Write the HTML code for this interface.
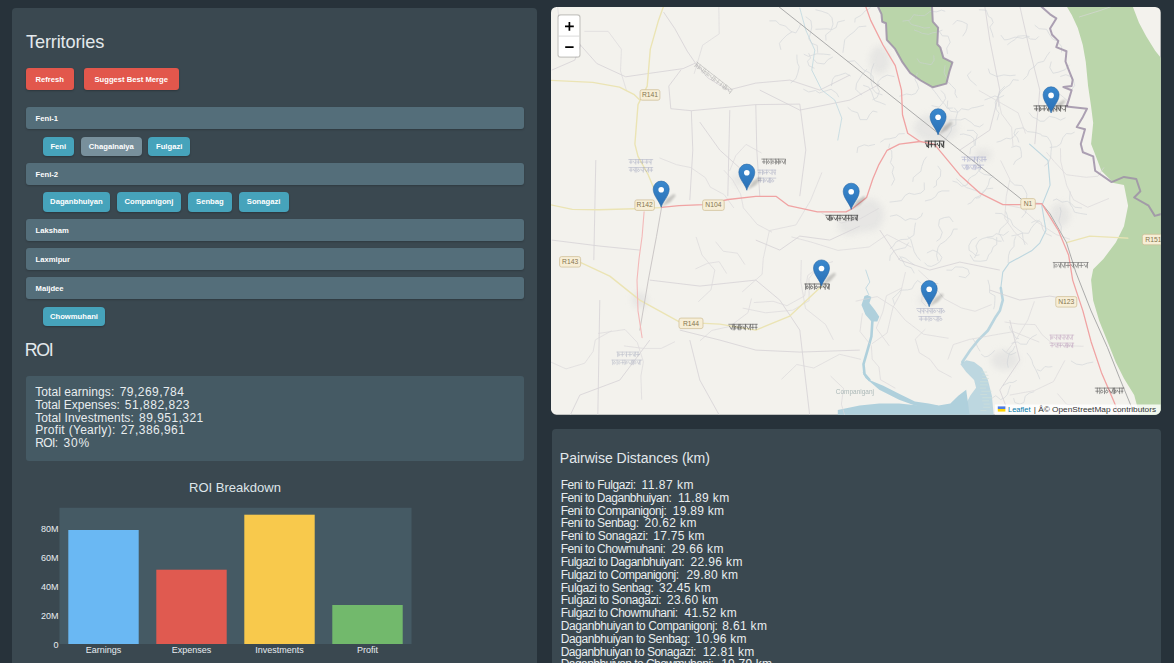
<!DOCTYPE html>
<html>
<head>
<meta charset="utf-8">
<title>Territories</title>
<style>
*{box-sizing:border-box;margin:0;padding:0}
html,body{width:1174px;height:663px;overflow:hidden;background:#27323a;font-family:"Liberation Sans",sans-serif;color:#eceff1}
.abs{position:absolute}
#left{position:absolute;left:12px;top:8px;width:525px;height:670px;background:#3a4850;border-radius:4px 4px 0 0}
#right{position:absolute;left:552px;top:428.5px;width:608.8px;height:250px;background:#3a4850;border-radius:4px 4px 0 0}
h2{position:absolute;font-weight:normal;color:#e3e9ec;white-space:nowrap;line-height:1}
.btn{position:absolute;top:67.8px;height:22.6px;background:#e2574c;border-radius:3px;color:#fff;font-weight:bold;font-size:7.65px;line-height:23.8px;text-align:center;box-shadow:0 1px 2px rgba(0,0,0,.25)}
.th{position:absolute;left:26px;width:498px;height:22.4px;background:#546e7a;border-radius:3px;color:#fff;font-weight:bold;font-size:7.65px;line-height:23.6px;padding-left:9.6px;box-shadow:0 1px 2px rgba(0,0,0,.2)}
.chip{position:absolute;height:19.5px;background:#46a3bb;border-radius:4px;color:#fff;font-weight:bold;font-size:7.65px;line-height:19.9px;text-align:center;box-shadow:0 1px 2px rgba(0,0,0,.25)}
.chip.g{background:#78909c}
#roibox{position:absolute;left:26px;top:376px;width:498px;height:84.5px;background:#455a64;border-radius:3px}
.tx{position:absolute;font-size:12px;line-height:14px;color:#e8edef;white-space:pre}
.rl{position:absolute;left:35.5px;font-size:12.6px;line-height:13px;color:#f3f6f7;white-space:nowrap}
.dl{position:absolute;left:560.7px;font-size:12.6px;line-height:13px;color:#f3f6f7;white-space:nowrap}
</style>
</head>
<body>
<div id="left"></div>
<div id="right"></div>

<h2 style="left:26px;top:33.1px;font-size:18.2px;letter-spacing:-0.16px">Territories</h2>
<div class="btn" style="left:25.5px;width:48.5px">Refresh</div>
<div class="btn" style="left:84px;width:94.5px">Suggest Best Merge</div>

<div class="th" style="top:107px">Feni-1</div>
<div class="chip" style="top:136.5px;left:42.7px;width:31.2px">Feni</div>
<div class="chip g" style="top:136.5px;left:81px;width:60.6px">Chagalnaiya</div>
<div class="chip" style="top:136.5px;left:148px;width:42.4px">Fulgazi</div>

<div class="th" style="top:162.7px">Feni-2</div>
<div class="chip" style="top:192px;left:42.7px;width:67.5px">Daganbhuiyan</div>
<div class="chip" style="top:192px;left:117.3px;width:63.4px">Companigonj</div>
<div class="chip" style="top:192px;left:187.9px;width:43.9px">Senbag</div>
<div class="chip" style="top:192px;left:238.7px;width:49.9px">Sonagazi</div>

<div class="th" style="top:218.7px">Laksham</div>
<div class="th" style="top:247.7px">Laxmipur</div>
<div class="th" style="top:276.9px">Maijdee</div>
<div class="chip" style="top:306.5px;left:42.7px;width:62.5px">Chowmuhani</div>

<h2 style="left:24.7px;top:341.9px;font-size:17.8px;letter-spacing:-1.28px">ROI</h2>
<div id="roibox"></div>
<!--ROI_S-->
<div class="tx" style="left:35.2px;top:385.0px;letter-spacing:0.07px">Total earnings:</div><div class="tx" style="left:119.7px;top:385.0px;letter-spacing:0.46px">79,269,784</div>
<div class="tx" style="left:35.2px;top:397.8px;letter-spacing:-0.01px">Total Expenses:</div><div class="tx" style="left:124.8px;top:397.8px;letter-spacing:0.52px">51,882,823</div>
<div class="tx" style="left:35.2px;top:410.6px;letter-spacing:0.11px">Total Investments:</div><div class="tx" style="left:139.1px;top:410.6px;letter-spacing:0.46px">89,951,321</div>
<div class="tx" style="left:35.2px;top:423.3px;letter-spacing:0.30px">Profit (Yearly):</div><div class="tx" style="left:120.7px;top:423.3px;letter-spacing:0.46px">27,386,961</div>
<div class="tx" style="left:35.2px;top:436.1px;letter-spacing:-0.60px">ROI:</div><div class="tx" style="left:63.4px;top:436.1px;letter-spacing:0.85px">30%</div>
<!--ROI_E-->

<svg class="abs" style="left:0;top:470px" width="540" height="193" viewBox="0 470 540 193">
<rect x="59.5" y="507.8" width="352" height="136.2" fill="#455a64"/>
<rect x="68.3" y="530" width="70.4" height="114" fill="#6ab8f3"/>
<rect x="156.3" y="569.7" width="70.4" height="74.3" fill="#e05a50"/>
<rect x="244.3" y="514.7" width="70.4" height="129.3" fill="#f8c94c"/>
<rect x="332.3" y="605" width="70.4" height="39" fill="#72b96c"/>
<g font-family="Liberation Sans, sans-serif" fill="#e8edf0" font-size="9px">
<text x="235" y="491.5" text-anchor="middle" font-size="13px" fill="#dfe6ea">ROI Breakdown</text>
<text x="58.6" y="532.3" text-anchor="end">80M</text>
<text x="58.6" y="561.1" text-anchor="end">60M</text>
<text x="58.6" y="589.8" text-anchor="end">40M</text>
<text x="58.6" y="618.6" text-anchor="end">20M</text>
<text x="58.6" y="647.6" text-anchor="end">0</text>
<text x="103.5" y="653.4" text-anchor="middle">Earnings</text>
<text x="191.5" y="653.4" text-anchor="middle">Expenses</text>
<text x="279.5" y="653.4" text-anchor="middle">Investments</text>
<text x="367.5" y="653.4" text-anchor="middle">Profit</text>
</g>
</svg>
<!--MAP_S-->
<svg class="abs" style="left:551.2px;top:6.9px" width="609.7" height="407.7" viewBox="551.2 6.9 609.7 407.7">
<defs>
<clipPath id="mc"><rect x="551.2" y="6.9" width="609.7" height="407.7" rx="5.5" ry="5.5"/></clipPath>
<linearGradient id="mg" x1="0" y1="0" x2="0" y2="1"><stop offset="0" stop-color="#3a88cd"/><stop offset="1" stop-color="#2a70b6"/></linearGradient>
<filter id="bl" x="-50%" y="-50%" width="200%" height="200%"><feGaussianBlur stdDeviation="1.1"/></filter>
<filter id="bl2" x="-50%" y="-50%" width="200%" height="200%"><feGaussianBlur stdDeviation="3"/></filter>
</defs>
<g clip-path="url(#mc)">
<rect x="550" y="6" width="612" height="410" fill="#f3f2ed"/>
<g fill="#dcdcdc" opacity=".55" filter="url(#bl2)"><ellipse cx="936" cy="128" rx="22" ry="14"/><ellipse cx="938" cy="126" rx="14" ry="9"/><ellipse cx="862" cy="218" rx="14" ry="14"/><ellipse cx="870" cy="215" rx="14" ry="16"/><ellipse cx="850" cy="225" rx="12" ry="10"/><ellipse cx="1005" cy="360" rx="14" ry="10"/><ellipse cx="1060" cy="215" rx="10" ry="12"/><ellipse cx="880" cy="60" rx="10" ry="14"/><ellipse cx="640" cy="300" rx="8" ry="8"/><ellipse cx="740" cy="180" rx="7" ry="6"/><ellipse cx="925" cy="300" rx="7" ry="5"/><ellipse cx="983" cy="155" rx="9" ry="6"/></g>
<g fill="#bad5aa"><path d="M877.9 6.0L881.7 14.1L882.4 21.6L886.2 23.1L887.0 39.7L895.3 48.8L902.8 62.3L910.4 72.9L920.9 80.4L933.0 87.2L946.6 83.5L949.6 71.4L952.6 62.3L943.6 57.8L940.5 47.3L937.5 44.2L938.3 27.6L933.0 21.6L932.2 6.0Z"/><path d="M1066.7 6.0L1072.0 15.0L1078.0 28.0L1083.0 45.0L1086.0 62.0L1088.3 86.0L1091.3 106.5L1093.4 122.9L1091.3 144.0L1095.4 154.3L1101.6 170.7L1113.9 183.0L1124.2 185.0L1128.3 205.6L1124.2 226.1L1116.0 242.5L1103.6 258.9L1093.4 269.2L1091.3 280.0L1093.4 300.5L1099.5 321.0L1107.8 341.6L1116.0 362.1L1124.2 378.5L1134.4 394.9L1140.0 416.0L1162.0 416.0L1162.0 59.0L1155.4 50.7L1146.4 36.2L1139.2 22.6L1132.8 6.0Z"/></g>
<g fill="#afd0dc"><path d="M864.7 295.9L861.7 304.8L865.7 314.6L871.6 321.5L877.5 321.5L879.5 316.6L875.6 310.7L869.6 302.8L871.6 296.9L867.7 294.9Z"/><path d="M869.6 379.8L883.5 385.7L899.3 393.6L915.1 401.5L928.9 403.5L938.8 405.5L930.9 408.5L915.1 405.5L899.3 399.6L879.5 389.7L865.7 377.8L862.5 372.0Z"/><path d="M838.0 410.0L859.8 405.5L879.5 403.5L899.3 403.5L919.0 405.5L938.8 405.5L950.6 403.5L958.5 395.6L966.4 389.7L970.0 416.0L838.0 416.0Z"/><path d="M960.5 364.0L966.4 371.9L974.3 379.8L976.3 387.7L970.4 395.6L966.4 403.5L966.4 416.0L994.0 416.0L992.1 395.6L988.1 379.8L982.2 368.0L974.3 362.0L966.4 360.1Z" opacity=".8"/></g>
<g fill="none" stroke="#afd0dc" stroke-linejoin="round" stroke-linecap="round">
<path d="M872.6 321.0L871.6 336.4L867.7 350.2L863.7 364.0L864.7 373.9L869.6 379.8" stroke-width="2.6"/>
<path d="M962.5 362.0L970.4 350.2L978.3 340.3L988.1 330.4L996.0 316.6L1000.0 310.7L1003.0 300.0L1001.0 288.0" stroke-width="2.6" opacity=".85"/>
<path d="M1029.8 144.0L1040.0 153.0L1048.2 160.4L1050.3 185.0L1042.0 205.6L1046.2 230.2L1040.0 243.0L1031.8 250.7L1009.3 263.0L1003.0 272.0L1001.0 288.0" stroke-width="1.1" opacity=".8"/>
<path d="M868.9 294.4L866.0 288.0L870.0 282.0L866.0 270.0" stroke-width="1" opacity=".7"/>
<path d="M800.0 8.0L806.0 30.0L815.0 50.0L812.0 70.0L822.0 90.0L835.0 100.0L842.0 118.0L838.0 140.0" stroke-width="1" opacity=".6"/>
</g>
<g stroke="#cfe0d8" stroke-width=".8" opacity=".8"><path d="M981.3 372.0h6"/><path d="M982.6 375.2h6"/><path d="M982.1 378.4h7"/><path d="M980.2 381.6h8"/><path d="M980.1 384.8h8"/><path d="M980.3 388.0h6"/><path d="M981.7 391.2h10"/><path d="M980.5 394.4h7"/><path d="M982.5 397.6h10"/><path d="M982.3 400.8h7"/><path d="M983.9 404.0h6"/><path d="M983.4 407.2h7"/><path d="M980.6 410.4h6"/></g>
<g fill="none" stroke="#d6d2d6" stroke-width=".8" stroke-linejoin="round"><path d="M580.7 45.0L597.0 63.4L625.9 76.7L646.4 73.7L683.3 68.5L695.6 63.0"/><path d="M663.8 12.0L675.0 28.5L687.4 51.0L695.6 63.0L708.0 77.8L728.5 90.0L756.0 83.0L790.0 80.0L820.0 90.0L850.0 75.0"/><path d="M681.3 69.6L669.0 86.0L671.0 108.6L691.5 110.6L756.0 104.5L800.0 104.0L806.0 150.0L800.0 196.0"/><path d="M560.0 20.0L580.7 45.0L575.0 60.0L552.0 70.0"/><path d="M691.5 110.6L693.0 150.0L690.0 200.0"/><path d="M756.0 104.5L757.0 150.0L760.0 196.0"/><path d="M700.0 122.0L720.0 150.0L740.0 168.0"/><path d="M756.0 240.0L780.0 250.0L800.0 236.0L830.0 240.0L860.0 226.0"/><path d="M552.0 240.0L600.0 246.0L640.0 250.0"/><path d="M650.0 280.0L700.0 286.0L756.0 280.0L780.0 300.0L800.0 330.0L810.0 416.0"/><path d="M680.0 330.0L720.0 340.0L756.0 350.0L800.0 352.0L860.0 350.0"/><path d="M600.0 300.0L598.0 416.0"/><path d="M650.0 340.0L620.0 380.0L580.0 395.0L570.0 416.0"/><path d="M690.0 340.0L700.0 380.0L720.0 416.0"/><path d="M760.0 90.0L800.0 110.0L850.0 100.0L880.0 84.0"/><path d="M960.0 150.0L990.0 130.0L1000.0 90.0L990.0 40.0L985.0 6.0"/><path d="M1020.0 6.0L1030.0 50.0L1040.0 90.0L1035.0 144.0"/><path d="M880.0 230.0L900.0 260.0L930.0 270.0L960.0 262.0L1000.0 270.0"/><path d="M990.0 290.0L1020.0 300.0L1050.0 296.0L1075.0 300.0"/><path d="M1010.0 320.0L1020.0 360.0L1000.0 390.0L1010.0 416.0"/><path d="M596.0 160.0L594.0 260.0"/><path d="M730.0 110.0L728.0 196.0"/></g>
<g fill="none" stroke="#cdd0d6" stroke-width=".8" stroke-linejoin="round" opacity=".7"><path d="M907.8 236.3L910.9 239.2L912.6 245.1L914.4 251.6L917.2 256.4L920.7 260.4"/><path d="M872.7 99.6L877.3 97.4L879.6 91.3L877.9 87.7L878.2 81.7L882.0 77.6L887.3 75.0L894.7 76.5"/><path d="M962.9 36.1L965.9 31.7L967.1 28.1L967.5 24.0L962.3 21.4L957.1 20.3L953.2 24.4"/><path d="M996.9 237.1L997.0 244.4L993.4 246.8L991.6 251.9L988.9 254.9L986.8 260.4L980.4 261.2L974.0 260.8L970.2 254.7"/><path d="M983.7 124.0L979.7 126.8L974.6 125.4L971.2 122.1L965.2 118.3L960.9 119.8L953.3 119.7L949.2 120.0"/><path d="M1011.6 147.3L1016.3 145.8L1020.3 147.1L1021.4 151.3L1021.7 157.1L1015.8 160.8L1013.7 164.7"/><path d="M979.7 161.1L980.4 168.8L976.1 174.4L971.9 176.5L969.0 178.9L967.2 184.9L961.8 186.2L957.1 182.2L952.7 181.0"/><path d="M891.7 185.4L894.8 179.3L892.4 172.5L893.9 167.0L890.7 162.6L892.1 157.4L891.9 150.8L889.0 147.7L889.9 143.5"/><path d="M988.1 279.8L989.8 285.9L989.8 292.7L995.2 295.8L995.1 300.3L994.8 305.3L993.8 309.1"/><path d="M974.7 257.9L977.7 251.3L976.2 245.9L979.2 240.4L982.9 238.4L986.8 237.4L992.6 238.2L997.9 240.9L1001.7 241.2"/><path d="M930.1 27.4L924.4 28.0L919.2 26.2L911.9 24.5L908.4 20.3"/><path d="M946.7 270.0L952.2 270.1L955.5 266.8L962.9 267.1L968.3 269.3L969.6 273.8L965.7 277.6L959.0 276.2"/><path d="M926.9 156.6L924.1 160.4L922.0 166.4L921.1 171.2L917.4 174.1L913.5 177.5L913.0 181.8"/><path d="M977.1 237.2L972.1 240.0L969.1 245.4L969.3 250.2L972.8 252.4L976.1 255.5L979.8 254.7"/><path d="M924.8 262.6L927.7 265.7L931.5 266.3L936.2 264.3L940.4 261.4L942.1 257.2L938.4 252.3L933.1 250.0L927.1 252.9"/><path d="M936.7 241.2L940.4 238.5L942.5 232.2L938.8 225.4L939.7 219.3L944.5 217.5L949.6 216.8L953.4 221.9"/><path d="M867.0 69.1L862.0 75.0L858.7 80.2L856.7 83.6L856.0 89.2L858.9 92.3L862.3 95.0"/><path d="M866.5 26.0L858.9 26.7L854.1 31.9L848.6 35.9L844.9 39.7L844.0 46.3L843.1 52.7"/><path d="M938.4 261.1L936.8 255.3L938.1 247.8L940.0 244.5L945.6 241.0L948.1 238.2L951.3 234.9L953.8 229.0L957.8 229.0"/><path d="M975.6 145.6L975.7 141.0L977.6 134.3L973.5 130.3L967.2 130.3"/><path d="M953.0 107.9L947.3 108.2L945.1 104.4L941.4 100.4L937.1 94.4L934.5 91.0L931.7 87.9"/><path d="M938.5 283.6L931.2 282.8L926.0 285.8L922.7 291.1L922.4 296.2L921.9 301.4L926.6 306.5"/><path d="M922.8 212.7L921.5 216.2L916.7 219.3L910.2 218.5L905.4 220.4L900.9 216.9L896.9 214.8L890.1 216.2"/><path d="M1005.0 86.1L1000.3 91.1L998.2 96.7L995.4 102.1L996.5 109.4L999.3 113.1L997.3 120.1"/><path d="M945.3 65.3L944.3 72.9L946.7 77.4L948.0 81.5L951.8 85.5L955.7 89.5L955.2 93.6L957.4 97.8"/><path d="M874.1 83.4L873.1 76.4L869.6 72.6L863.8 69.7L859.8 65.6L854.7 60.7L847.4 61.5"/><path d="M960.1 134.4L963.8 133.9L970.7 135.7L973.9 138.3L974.6 145.5L970.9 147.9L970.0 154.3"/><path d="M1005.9 211.3L1007.4 215.0L1008.4 221.4L1004.2 225.7L1000.4 229.0L999.1 233.3L1001.6 236.7L1003.7 241.3"/><path d="M909.0 242.4L905.6 247.6L900.9 248.6L894.8 250.2L890.4 255.7L889.9 260.7"/><path d="M925.2 200.9L931.7 199.3L935.8 196.5L938.3 192.3L942.2 190.8L949.6 190.8"/><path d="M1001.1 35.0L1004.6 39.8L1008.4 39.4L1015.3 37.0L1023.0 38.3L1027.3 36.8L1030.8 38.9L1036.0 39.3L1038.9 36.4"/><path d="M914.5 273.2L911.5 267.7L905.4 265.6L903.0 260.8L899.8 255.7"/><path d="M933.6 187.4L936.7 185.3L936.7 180.6L940.6 176.3L941.0 170.1L938.0 165.8"/><path d="M902.7 21.0L910.1 20.1L913.9 14.6L919.0 15.4L924.7 15.6L930.2 11.4L937.0 11.7L941.7 10.0L945.4 11.2"/><path d="M976.7 85.5L973.0 82.2L970.0 79.6L967.6 75.0L971.4 71.3"/><path d="M880.6 142.1L885.0 139.1L889.8 138.7L896.1 137.2L898.9 133.8L904.9 133.5"/><path d="M921.4 283.0L917.8 280.4L914.7 284.0L912.3 288.7L907.9 289.8L900.9 290.1L897.8 293.7L892.9 298.2L894.7 304.5"/><path d="M914.2 29.9L918.7 31.4L922.5 33.3L928.8 34.2L933.2 32.6L937.0 32.1L942.6 30.0"/><path d="M874.1 63.4L871.7 70.0L871.0 75.0L871.5 82.8L873.1 89.0L876.2 92.8L882.7 94.8"/><path d="M996.8 142.1L1001.0 141.0L1006.5 138.1L1010.8 138.7L1014.3 136.4L1018.7 131.1"/><path d="M984.7 99.9L988.5 98.5L995.2 95.8L999.3 97.7L1004.3 95.3"/><path d="M988.5 68.5L990.0 73.3L996.9 76.4L1004.0 74.8L1010.3 75.6L1015.8 75.0"/><path d="M980.6 192.0L974.6 190.1L971.0 188.8L966.5 187.4L962.7 184.3L959.8 181.4L956.5 178.4"/><path d="M939.1 30.8L942.6 35.7L948.3 36.0L950.4 42.2L946.9 48.1L947.7 53.8"/><path d="M1008.3 262.8L1008.7 255.7L1010.1 251.0L1014.2 246.3L1014.4 240.7L1015.9 236.3"/><path d="M917.7 72.7L915.2 79.5L917.4 83.4L919.0 88.3L915.8 93.4L911.9 94.7L906.6 93.9L899.5 96.2"/><path d="M915.8 222.6L914.9 227.4L914.1 235.0L907.9 239.1L901.1 239.5L895.8 242.2L893.3 246.4L890.1 248.6"/><path d="M947.9 100.5L947.5 106.6L950.9 111.2L958.4 112.1L961.7 108.6L968.4 109.8L971.9 107.9L976.9 107.0L984.1 105.1"/><path d="M898.5 259.4L902.0 256.8L905.9 258.3L909.6 261.3L914.7 265.0"/><path d="M924.4 182.5L924.6 189.8L921.1 192.9L914.6 194.3L909.3 193.1L905.5 195.2L901.7 200.5L895.2 201.4L889.8 202.0"/><path d="M941.1 90.3L944.8 94.2L945.9 98.3L943.3 102.5L939.3 107.1L931.8 105.5"/><path d="M943.1 145.1L945.5 139.2L948.3 135.5L951.4 130.7L951.7 126.7L956.1 124.6L956.1 118.1L958.0 111.7L954.3 107.6"/><path d="M986.7 237.2L993.2 236.2L996.4 233.6L1003.7 235.2L1008.9 231.3"/><path d="M934.0 55.2L934.3 60.2L931.4 64.6L924.7 63.4L920.0 62.4L917.3 58.4"/><path d="M875.2 144.3L868.5 145.8L864.4 144.7L858.0 147.2L857.2 152.8"/><path d="M1061.7 52.4L1061.8 46.4L1057.1 40.8L1052.9 39.0L1049.1 33.3L1046.8 29.2L1039.3 28.6L1034.9 25.0"/><path d="M1023.5 79.7L1027.7 75.5L1029.7 70.0L1035.1 66.2L1037.8 62.7L1044.0 61.2L1047.2 55.6L1050.1 51.7"/><path d="M1069.7 64.7L1065.3 69.6L1058.2 72.2L1053.2 73.1L1050.0 67.5L1051.5 61.5"/><path d="M1007.6 44.7L1011.5 41.6L1015.1 39.6L1017.9 36.1L1024.4 35.6L1029.8 36.5"/><path d="M1044.3 103.1L1048.8 98.6L1051.6 93.3L1058.4 92.9L1063.4 96.9L1067.4 100.5"/><path d="M998.8 106.5L999.0 101.1L998.8 95.8L1001.2 91.7L1005.6 87.6L1010.2 84.6L1013.2 79.6L1018.9 80.2"/><path d="M1041.7 134.4L1035.1 132.3L1027.7 131.5L1023.3 127.7L1015.8 128.9L1014.2 133.8L1017.7 137.9L1019.1 142.4"/><path d="M1010.2 180.5L1014.9 184.9L1022.3 185.5L1025.3 190.2L1027.1 194.2L1026.4 201.1L1027.1 207.9L1025.4 213.3L1021.9 217.6"/><path d="M1051.9 236.1L1046.0 233.4L1042.9 229.0L1041.3 222.2L1036.8 220.2L1031.6 222.6"/><path d="M1074.8 132.0L1071.3 133.8L1066.7 133.4L1063.1 137.6L1060.8 143.9L1056.8 146.6L1050.0 147.4"/><path d="M1070.5 191.3L1069.9 197.9L1070.2 203.9L1072.7 207.4L1074.8 212.1L1080.3 213.3L1087.2 214.4"/><path d="M1065.7 117.6L1060.7 120.0L1055.5 117.5L1049.5 116.3L1044.3 121.1L1040.3 121.1L1036.8 118.6L1032.9 117.1L1029.2 112.5"/><path d="M1039.9 219.8L1034.9 223.7L1031.3 228.3L1028.8 233.2L1022.5 233.0L1017.9 234.7L1011.7 235.8"/><path d="M993.6 176.2L989.9 178.6L988.6 184.6L985.1 191.0L980.7 195.5L975.0 197.8L971.6 202.4L967.9 204.2"/><path d="M993.3 188.1L986.5 188.8L982.6 192.1L979.9 197.5L976.1 198.1"/><path d="M993.5 37.3L992.6 33.7L990.1 26.9L993.4 22.6L991.8 18.2L988.7 16.3L986.4 10.0L979.1 9.7"/><path d="M991.6 175.5L984.3 174.3L979.6 171.4L978.5 165.6L977.1 158.4L979.4 155.5"/><path d="M995.4 213.2L1002.1 213.5L1005.7 216.5L1010.7 219.5L1013.1 225.3L1018.0 229.2L1022.6 232.5L1023.2 238.4L1025.3 245.0"/><path d="M1053.3 200.3L1056.8 198.9L1062.3 202.0L1067.5 201.2L1071.6 203.6L1074.9 207.1L1082.3 207.9"/><path d="M1060.5 76.4L1066.1 74.6L1072.5 77.1L1073.8 80.9L1074.9 85.3L1071.9 89.5"/><path d="M1044.6 165.9L1048.4 163.0L1050.8 157.7L1051.2 152.4L1051.9 145.4L1050.5 141.1L1047.4 136.6L1041.5 135.5"/><path d="M1060.2 207.1L1061.2 211.1L1060.5 215.3L1059.0 220.8L1061.5 226.5L1061.2 232.5"/><path d="M803.5 89.0L808.9 91.9L815.7 90.4L819.4 92.9L824.4 91.3L831.3 89.2L836.7 92.9L839.0 97.0"/><path d="M801.0 23.5L799.2 27.8L796.0 32.9L792.3 31.6L787.1 35.0L782.4 39.7L779.6 43.3L781.1 49.7"/><path d="M833.1 56.9L828.4 59.3L824.4 63.9L817.1 62.9L813.9 59.2"/><path d="M855.0 22.4L855.4 18.4L861.5 15.1L865.4 10.8L870.2 8.1L871.1 1.7L872.7 -5.1"/><path d="M804.0 54.1L808.6 56.3L812.6 55.1L816.7 53.7L823.6 54.0L830.6 54.7"/><path d="M847.9 107.2L851.8 110.7L857.9 112.7L860.3 119.5L867.2 119.5L869.8 114.5L873.1 110.9L877.5 112.0"/><path d="M792.4 32.1L789.3 29.7L785.8 26.0L779.8 24.3L776.2 20.7L769.6 20.8"/><path d="M844.9 20.3L838.0 21.9L836.4 27.3L832.3 29.5L827.3 28.7L821.2 29.0L815.7 29.2"/><path d="M790.9 82.9L795.9 78.8L798.0 73.1L799.4 66.7L797.7 63.0L797.1 58.2L797.1 54.5"/><path d="M863.4 85.2L869.1 87.1L871.9 92.1L873.1 96.0L875.0 100.6L879.9 102.2L885.8 104.6"/><path d="M831.6 85.9L832.7 79.5L835.1 76.1L838.8 75.3L845.5 73.0L851.0 76.0"/><path d="M808.9 53.1L810.8 57.9L807.7 61.1L809.2 65.7L814.7 68.2"/><path d="M817.9 52.7L817.5 45.4L811.9 43.2L808.9 38.6L810.4 34.1L812.0 26.9L811.1 20.6L805.9 16.6"/><path d="M826.2 40.5L825.9 34.8L831.2 30.5L833.2 24.1L832.2 17.7L828.5 13.5L822.1 11.2L815.7 9.6"/><path d="M1011.7 343.2L1017.4 341.8L1020.9 344.0L1026.9 344.2L1028.8 340.4L1032.1 337.0L1036.9 334.5"/><path d="M1052.5 366.5L1049.0 367.0L1045.1 366.5L1040.9 371.0L1037.1 369.5"/><path d="M1040.1 379.2L1038.2 374.5L1036.1 369.8L1033.2 364.5L1032.0 360.1L1030.0 356.4L1027.1 352.8"/><path d="M1010.6 385.1L1008.8 390.5L1007.8 394.2L1004.4 397.9L1000.8 399.5L996.0 395.6L992.4 398.0"/><path d="M1008.5 367.6L1007.4 362.9L1008.1 358.7L1009.7 352.8L1013.1 350.4L1015.1 346.0"/><path d="M1034.5 391.6L1029.5 393.0L1025.4 396.1L1024.2 402.3L1020.2 404.1L1015.0 402.4L1013.8 398.0"/><path d="M994.9 350.3L992.0 353.5L988.1 356.2L985.0 356.8L981.4 354.1"/><path d="M980.4 351.3L978.1 347.6L976.1 343.1L973.1 338.6"/><path d="M1019.1 338.5L1016.0 338.1L1013.9 333.9L1010.6 329.5L1009.7 326.1"/><path d="M1002.6 349.3L1007.0 352.9L1011.1 354.8L1016.4 352.3"/><path d="M1071.2 360.8L1076.5 364.0L1082.5 364.9L1087.4 363.1L1093.5 362.0"/><path d="M1017.0 380.3L1013.1 382.4L1009.8 382.3L1006.8 383.6L1003.0 385.5"/></g>
<g fill="none" stroke="#dad7da" stroke-width=".75" stroke-linejoin="round" opacity=".85"><path d="M1013.2 146.0L1011.8 127.3L1001.7 113.7L997.8 95.9"/><path d="M700.2 340.7L712.1 330.3L729.7 326.5L748.2 312.6L751.7 298.5"/><path d="M1027.8 244.1L1014.9 232.2L1005.0 218.2L1006.4 196.6L1010.1 179.3L1000.8 160.3"/><path d="M726.9 273.5L719.4 261.6L707.6 263.3L695.7 268.8"/><path d="M801.5 259.9L801.0 281.3L805.7 308.4L825.7 324.3L833.6 339.8"/><path d="M1034.6 301.3L1028.1 319.7L1016.6 338.9L1006.7 351.8"/><path d="M830.8 376.0L843.7 388.2L841.6 404.1L849.4 430.0L877.5 442.5L902.2 432.7"/><path d="M948.7 338.2L923.7 334.1L905.6 320.3L895.0 307.6L877.4 296.5L855.9 301.1"/><path d="M925.4 329.2L915.5 339.0L919.5 352.6L930.2 359.2L938.3 370.0L951.8 377.2"/><path d="M1046.6 152.1L1054.4 161.4L1066.6 174.6L1086.4 177.2L1098.0 176.2L1104.2 167.3"/><path d="M1025.8 133.5L1018.3 112.7L1001.8 103.3L979.0 90.3"/><path d="M895.5 388.1L880.7 379.6L879.2 367.0L872.4 359.0L871.6 345.8L860.2 331.4L862.6 313.1"/><path d="M991.8 304.5L975.2 311.2L961.6 307.8L944.1 298.5L929.8 280.3L918.6 270.1"/><path d="M715.8 241.6L723.5 251.2L737.6 253.1L745.1 264.5"/><path d="M1004.8 321.9L1018.7 324.0L1035.4 324.5L1042.3 334.6L1053.3 344.0L1063.5 345.5L1083.7 346.2"/><path d="M1010.0 395.0L1034.7 390.5L1053.7 381.5L1065.1 360.3"/><path d="M889.5 345.8L876.5 328.0L883.0 312.0L886.7 295.6L902.3 287.8"/><path d="M675.1 341.6L661.5 348.3L643.4 348.3L624.1 345.8"/><path d="M821.6 212.8L841.3 222.9L860.4 218.7L879.0 208.3"/><path d="M584.6 31.3L608.4 31.3L621.6 49.1L620.7 70.9L626.9 91.1"/><path d="M754.0 302.5L773.2 301.2L787.1 305.6L804.8 295.8L807.9 275.4L822.5 264.6"/><path d="M694.4 73.6L702.8 45.1L719.4 33.8L719.1 10.7L718.4 -18.3L697.4 -32.6"/><path d="M872.0 343.8L887.3 332.9L893.2 307.3L900.6 293.7L905.7 271.9"/><path d="M761.7 152.9L746.3 144.3L736.0 155.5L729.8 170.9"/><path d="M696.3 236.9L702.2 254.9L715.0 270.0L711.2 289.7L698.5 301.6"/><path d="M1060.7 148.2L1060.9 161.1L1066.9 185.3L1073.7 199.6L1087.9 207.2L1109.2 198.3"/><path d="M791.7 236.8L810.8 241.8L838.2 250.3L869.3 246.9L887.3 234.5L911.6 247.1"/><path d="M1039.4 342.0L1013.8 331.6L998.8 334.1L969.5 339.4L953.5 344.5L948.1 359.4"/><path d="M598.2 333.4L625.2 329.4L637.5 342.4L643.6 361.7L641.1 376.0L641.9 399.5"/><path d="M734.0 207.8L724.4 194.5L710.5 187.0L705.5 177.5L691.1 167.5L676.8 164.6L659.7 157.8"/><path d="M1070.3 239.2L1056.4 234.5L1037.0 221.7L1021.6 208.0L1004.0 204.3"/><path d="M611.9 330.6L595.5 339.8L593.3 351.4L584.8 363.2L566.2 368.8L550.2 361.6"/><path d="M742.4 291.8L762.3 274.2L763.5 258.3L769.6 230.5L796.2 224.8L810.7 200.5L822.1 172.4"/><path d="M576.0 23.1L559.2 18.7L557.3 2.0L541.2 -10.6L522.4 -13.6L509.1 -8.5L498.7 -17.8"/><path d="M861.2 359.3L839.8 354.2L814.0 367.9L797.0 364.4L781.8 379.1"/><path d="M742.9 308.0L765.8 312.7L792.9 310.1L809.3 300.6L809.2 278.4L819.4 265.6L833.2 261.5"/><path d="M1057.7 393.5L1066.9 404.3L1078.8 405.5L1085.0 414.5L1077.3 428.4L1077.6 439.4L1084.9 446.9"/><path d="M772.2 232.1L757.3 224.2L743.6 207.8L740.8 193.9L732.9 179.9L724.1 170.1"/><path d="M1079.1 17.0L1100.4 10.4L1114.0 5.6L1134.4 -3.9L1154.9 -14.3L1174.4 -22.6"/></g>
<g fill="none" stroke="#9d91a7" stroke-width="2" stroke-linejoin="round" opacity=".85"><path d="M877.9 6.0L881.7 14.1L882.4 21.6L886.2 23.1L887.0 39.7L895.3 48.8L902.8 62.3L910.4 72.9L920.9 80.4L933.0 87.2L946.6 83.5L949.6 71.4L952.6 62.3L943.6 57.8L940.5 47.3L937.5 44.2L938.3 27.6L933.0 21.6L932.2 6.0"/><path d="M1041.0 6.0L1050.3 14.2L1056.5 18.3L1050.3 28.5L1052.3 34.7L1058.5 40.8L1056.5 47.0L1066.7 51.1L1065.7 61.4L1068.8 69.6L1072.9 79.8L1071.8 86.0L1063.6 87.0L1071.8 90.1L1068.8 100.3L1066.7 106.5L1087.2 108.6L1083.1 116.8L1077.0 127.0L1085.2 129.1L1081.0 144.0L1083.1 152.2L1093.4 156.3L1095.4 170.7L1111.9 182.0L1124.2 176.8L1136.5 178.9L1140.6 191.2L1134.4 197.4L1148.8 205.6L1155.0 215.8L1162.0 213.8"/></g>
<g fill="none" stroke-linejoin="round" stroke-linecap="round">
<g stroke="#ebe4b4" stroke-width="1.4"><path d="M663.8 6.0L658.7 20.3L650.5 49.0L647.4 86.0L638.2 104.5L635.1 144.0L638.2 156.3L648.5 174.8L661.8 207.2"/><path d="M550.0 80.2L593.0 82.3L619.7 87.0L634.0 94.2L640.0 100.0"/><path d="M550.0 204.5L572.5 209.3L599.2 209.7L634.0 208.6L661.0 207.5"/><path d="M580.0 262.0L610.0 276.0L640.0 300.0L680.0 322.0L720.0 324.0L756.0 330.0L790.0 316.0L822.0 286.0"/><path d="M1128.0 238.0L1090.0 236.0L1066.7 242.5"/></g>
<g stroke="#a3a3a3" stroke-width=".9"><path d="M777.0 5.0L1026.0 202.6L1042.0 203.5L1050.3 213.8L1066.7 242.5L1076.0 272.0L1091.3 310.8L1107.8 347.7L1120.0 378.5L1133.0 410.0"/><path d="M661.8 207.2L656.7 236.3L648.5 280.0L640.0 330.0" stroke="#c6c2c2"/></g>
<g stroke="#f0a3a3" stroke-width="1.3"><path d="M661.8 207.2L679.2 205.6L703.9 204.5L728.5 199.4L756.0 196.3L776.5 196.3L788.8 205.6L817.6 211.7L846.3 211.7L852.5 208.6L866.8 197.4L873.0 178.9L879.1 164.5L887.3 150.2L899.6 144.0L920.2 141.4"/><path d="M865.8 6.0L870.9 20.3L883.2 44.9L895.5 65.5L901.7 90.1L902.7 114.7L907.9 133.2L920.2 141.4L934.5 144.0L960.0 174.8L980.5 193.3L1003.1 204.5L1021.6 204.5L1042.0 203.5L1058.5 230.2L1068.8 254.8L1072.9 280.0L1083.1 310.8L1091.3 341.6L1101.6 372.3L1113.9 401.0L1120.0 416.0"/><path d="M644.3 211.7L642.3 236.3L639.2 258.9L637.2 280.0L638.2 310.8L642.3 337.5" stroke="#f3b9b9" stroke-width="1.1"/></g>
</g>
<g><rect x="635.1" y="199.8" width="19.5" height="10.5" rx="2" fill="#f7eed6" stroke="#cdbb92" stroke-width=".7"/><text x="644.9" y="207.4" text-anchor="middle" font-size="6.8px" fill="#85754f" font-family="Liberation Sans, sans-serif">R142</text><rect x="702.8" y="199.8" width="21.6" height="10.5" rx="2" fill="#f7eed6" stroke="#cdbb92" stroke-width=".7"/><text x="713.6" y="207.4" text-anchor="middle" font-size="6.8px" fill="#85754f" font-family="Liberation Sans, sans-serif">N104</text><rect x="559.8" y="256.5" width="21.0" height="10.5" rx="2" fill="#f7eed6" stroke="#cdbb92" stroke-width=".7"/><text x="570.3" y="264.1" text-anchor="middle" font-size="6.8px" fill="#85754f" font-family="Liberation Sans, sans-serif">R143</text><rect x="679.2" y="318.0" width="24.0" height="10.5" rx="2" fill="#f7eed6" stroke="#cdbb92" stroke-width=".7"/><text x="691.2" y="325.6" text-anchor="middle" font-size="6.8px" fill="#85754f" font-family="Liberation Sans, sans-serif">R144</text><rect x="640.3" y="89.6" width="19.8" height="10.5" rx="2" fill="#f7eed6" stroke="#cdbb92" stroke-width=".7"/><text x="650.2" y="97.2" text-anchor="middle" font-size="6.8px" fill="#85754f" font-family="Liberation Sans, sans-serif">R141</text><rect x="1021.0" y="198.5" width="14.5" height="10.5" rx="2" fill="#f7eed6" stroke="#cdbb92" stroke-width=".7"/><text x="1028.2" y="206.1" text-anchor="middle" font-size="6.8px" fill="#85754f" font-family="Liberation Sans, sans-serif">N1</text><rect x="1056.0" y="296.5" width="21.0" height="10.5" rx="2" fill="#f7eed6" stroke="#cdbb92" stroke-width=".7"/><text x="1066.5" y="304.1" text-anchor="middle" font-size="6.8px" fill="#85754f" font-family="Liberation Sans, sans-serif">N123</text><rect x="1142.6" y="234.2" width="22.0" height="10.5" rx="2" fill="#f7eed6" stroke="#cdbb92" stroke-width=".7"/><text x="1153.6" y="241.8" text-anchor="middle" font-size="6.8px" fill="#85754f" font-family="Liberation Sans, sans-serif">R151</text></g>
<g stroke="#222" stroke-width="0.9" fill="none" opacity="0.9" stroke-linecap="round"><path d="M925.3 141.0h17.8"/><path d="M925.9 143.0l1.6 4.0l1.5 -5.3M928.8 141.0v6.6M931.6 141.0v5.9M929.8 144.6h3.2M935.4 141.0v5.9M934.0 144.6h2.4M939.8 141.0v6.6M937.5 143.3q1.5 4.6 2.4 1.3M941.1 143.0l1.5 4.0l1.4 -5.3M943.9 141.0v6.6"/></g><g stroke="#333" stroke-width="0.8" fill="none" opacity="0.85" stroke-linecap="round"><path d="M826.0 215.2h32.0"/><path d="M826.6 216.8l1.8 3.2l1.6 -4.3M829.8 215.2v5.4M831.1 215.2v5.4M832.1 217.1a0.7 1.4 0 1 0 .1 0M833.9 216.8l2.1 3.2l1.9 -4.3M837.8 215.2v5.4M840.2 215.2v4.9M838.8 218.2h2.5M842.3 216.8l2.0 3.2l1.8 -4.3M846.1 215.2v5.4M848.8 215.2v4.9M847.1 218.2h3.0M851.5 215.2v5.4M853.1 217.1a1.0 1.4 0 1 0 .1 0M855.3 216.8l1.2 3.2l1.1 -4.3M857.4 215.2v5.4"/></g><g stroke="#333" stroke-width="0.8" fill="none" opacity="0.8" stroke-linecap="round"><path d="M805.0 283.9h24.0"/><path d="M805.9 283.9v5.4M807.4 285.8a1.0 1.4 0 1 0 .1 0M810.0 283.9v5.4M811.8 285.8a1.2 1.4 0 1 0 .1 0M814.6 283.9v5.4M816.4 285.8a1.1 1.4 0 1 0 .1 0M820.7 283.9v4.9M818.7 286.9h3.6M825.4 283.9v5.4M823.4 285.8q1.3 3.8 2.0 1.1M826.7 285.5l1.5 3.2l1.3 -4.3M829.3 283.9v5.4"/></g><g stroke="#333" stroke-width="0.8" fill="none" opacity="0.8" stroke-linecap="round"><path d="M1034.0 105.8h34.0"/><path d="M1036.6 105.8v4.9M1034.6 108.8h3.6M1039.6 105.8v5.4M1040.7 107.7a0.7 1.4 0 1 0 .1 0M1044.4 105.8v4.9M1042.5 108.8h3.4M1046.9 107.4l1.2 3.2l1.1 -4.3M1049.1 105.8v5.4M1050.1 107.4l1.8 3.2l1.6 -4.3M1053.4 105.8v5.4M1057.0 105.8v5.4M1054.4 107.7q1.6 3.8 2.6 1.1M1058.3 107.4l1.4 3.2l1.3 -4.3M1060.8 105.8v5.4M1065.6 105.8v5.4M1061.8 107.7q2.2 3.8 3.8 1.1"/></g><g stroke="#444" stroke-width="0.7" fill="none" opacity="0.75" stroke-linecap="round"><path d="M762.0 159.0h22.5"/><path d="M764.2 159.0v4.5M762.6 161.8h2.9M766.8 159.0v5.0M768.6 160.8a1.1 1.2 0 1 0 .1 0M771.3 159.0v5.0M773.1 160.8a1.2 1.2 0 1 0 .1 0M775.9 159.0v5.0M776.8 160.8a0.7 1.2 0 1 0 .1 0M778.8 159.0v5.0M780.1 160.8a0.9 1.2 0 1 0 .1 0M782.2 160.5l1.8 3.0l1.6 -4.0M785.5 159.0v5.0"/></g><g stroke="#444" stroke-width="0.7" fill="none" opacity="0.8" stroke-linecap="round"><path d="M729.0 324.2h28.5"/><path d="M729.6 325.9l2.0 3.4l1.8 -4.5M733.3 324.2v5.6M734.6 324.2v5.6M735.5 326.2a0.7 1.4 0 1 0 .1 0M737.2 325.9l1.1 3.4l1.0 -4.5M739.1 324.2v5.6M740.4 324.2v5.6M741.4 326.2a0.7 1.4 0 1 0 .1 0M743.1 325.9l1.4 3.4l1.3 -4.5M745.7 324.2v5.6M746.7 325.9l2.1 3.4l1.9 -4.5M750.6 324.2v5.6M753.0 324.2v5.0M751.6 327.3h2.5M756.3 324.2v5.0M755.1 327.3h2.2"/></g><g stroke="#555" stroke-width="0.7" fill="none" opacity="0.75" stroke-linecap="round"><path d="M1053.4 262.4h35.0"/><path d="M1054.3 262.4v5.4M1056.2 264.3a1.2 1.4 0 1 0 .1 0M1058.8 264.0l1.2 3.2l1.1 -4.3M1061.0 262.4v5.4M1062.0 264.0l1.8 3.2l1.6 -4.3M1065.2 262.4v5.4M1068.3 262.4v4.9M1066.2 265.4h3.8M1073.6 262.4v5.4M1071.2 264.3q1.5 3.8 2.4 1.1M1074.9 264.0l1.9 3.2l1.7 -4.3M1078.4 262.4v5.4M1081.5 262.4v4.9M1079.4 265.4h3.9M1084.4 264.0l1.8 3.2l1.6 -4.3M1087.7 262.4v5.4"/></g><g stroke="#444" stroke-width="0.7" fill="none" opacity="0.8" stroke-linecap="round"><path d="M1095.4 388.0h28.8"/><path d="M1097.5 388.0v5.0M1096.0 391.1h2.7M1100.0 388.0v5.6M1101.9 390.0a1.2 1.4 0 1 0 .1 0M1104.7 388.0v5.6M1106.8 390.0a1.3 1.4 0 1 0 .1 0M1109.4 389.7l2.2 3.4l2.0 -4.5M1113.4 388.0v5.6M1114.7 388.0v5.6M1115.7 390.0a0.7 1.4 0 1 0 .1 0M1119.8 388.0v5.6M1117.5 390.0q1.5 3.9 2.3 1.1M1122.3 388.0v5.0M1121.1 391.1h2.1"/></g><g stroke="#8a8fb0" stroke-width="0.7" fill="none" opacity="0.55" stroke-linecap="round"><path d="M629.0 159.5h24.0"/><path d="M631.1 159.5v4.1M629.6 162.0h2.7M636.0 159.5v4.6M633.3 161.1q1.6 3.2 2.7 0.9M638.5 159.5v4.1M637.3 162.0h2.2M642.6 159.5v4.1M640.5 162.0h3.8M647.0 159.5v4.1M645.4 162.0h2.8M651.2 159.5v4.6M649.2 161.1q1.3 3.2 2.0 0.9"/></g><g stroke="#8a8fb0" stroke-width="0.7" fill="none" opacity="0.55" stroke-linecap="round"><path d="M629.0 167.5h24.0"/><path d="M631.2 167.5v4.1M629.6 170.0h2.9M635.4 167.5v4.6M633.5 169.1q1.2 3.2 1.9 0.9M637.0 167.5v4.6M638.7 169.1a1.1 1.1 0 1 0 .1 0M643.5 167.5v4.6M641.0 169.1q1.5 3.2 2.5 0.9M644.8 168.9l2.1 2.8l1.9 -3.7M648.8 167.5v4.6M651.5 167.5v4.1M649.8 170.0h3.1"/></g><g stroke="#8a8fb0" stroke-width="0.7" fill="none" opacity="0.55" stroke-linecap="round"><path d="M917.0 308.5h26.0"/><path d="M920.9 308.5v4.6M917.6 310.1q1.9 3.2 3.3 0.9M924.0 308.5v4.6M922.2 310.1q1.2 3.2 1.8 0.9M928.1 308.5v4.6M925.3 310.1q1.7 3.2 2.9 0.9M931.3 308.5v4.6M929.4 310.1q1.2 3.2 1.8 0.9M932.9 308.5v4.6M934.8 310.1a1.2 1.1 0 1 0 .1 0M940.2 308.5v4.6M937.3 310.1q1.7 3.2 2.8 0.9M941.8 308.5v4.6M943.7 310.1a1.2 1.1 0 1 0 .1 0"/></g><g stroke="#8a8fb0" stroke-width="0.7" fill="none" opacity="0.55" stroke-linecap="round"><path d="M919.0 316.5h22.0"/><path d="M921.5 316.5v4.1M919.6 319.0h3.4M926.1 316.5v4.1M924.1 319.0h3.7M929.2 316.5v4.6M931.1 318.1a1.2 1.1 0 1 0 .1 0M937.4 316.5v4.6M933.6 318.1q2.2 3.2 3.8 0.9M939.0 316.5v4.6M941.0 318.1a1.2 1.1 0 1 0 .1 0"/></g><g stroke="#b08ab0" stroke-width="0.7" fill="none" opacity="0.55" stroke-linecap="round"><path d="M1050.0 335.0h24.0"/><path d="M1050.9 335.0v4.6M1052.2 336.6a0.9 1.1 0 1 0 .1 0M1056.9 335.0v4.6M1054.2 336.6q1.7 3.2 2.7 0.9M1058.2 336.4l1.3 2.8l1.2 -3.7M1060.6 335.0v4.6M1064.3 335.0v4.6M1061.6 336.6q1.7 3.2 2.7 0.9M1065.6 336.4l1.4 2.8l1.3 -3.7M1068.2 335.0v4.6M1069.2 336.4l1.8 2.8l1.6 -3.7M1072.5 335.0v4.6"/></g><g stroke="#b08ab0" stroke-width="0.7" fill="none" opacity="0.55" stroke-linecap="round"><path d="M1050.0 343.0h24.0"/><path d="M1052.3 343.0v4.1M1050.6 345.5h3.1M1054.7 344.4l1.8 2.8l1.7 -3.7M1058.1 343.0v4.6M1060.6 343.0v4.1M1059.1 345.5h2.6M1062.7 344.4l2.0 2.8l1.8 -3.7M1066.4 343.0v4.6M1067.7 343.0v4.6M1068.9 344.6a0.9 1.1 0 1 0 .1 0M1070.9 344.4l1.2 2.8l1.0 -3.7M1072.9 343.0v4.6"/></g><g stroke="#8a8fc0" stroke-width="0.7" fill="none" opacity="0.55" stroke-linecap="round"><path d="M962.0 157.0h24.0"/><path d="M964.7 157.0v4.1M962.6 159.5h3.8M967.9 157.0v4.6M969.6 158.6a1.1 1.1 0 1 0 .1 0M972.0 158.4l1.5 2.8l1.4 -3.7M974.7 157.0v4.6M977.8 157.0v4.6M975.7 158.6q1.3 3.2 2.0 0.9M982.3 157.0v4.6M979.1 158.6q1.9 3.2 3.2 0.9M985.2 157.0v4.1M983.6 159.5h3.0"/></g><g stroke="#8a8fc0" stroke-width="0.7" fill="none" opacity="0.55" stroke-linecap="round"><path d="M962.0 165.0h22.0"/><path d="M962.6 166.4l2.1 2.8l1.9 -3.7M966.6 165.0v4.6M967.9 165.0v4.6M968.8 166.6a0.7 1.1 0 1 0 .1 0M970.6 166.4l2.0 2.8l1.8 -3.7M974.2 165.0v4.6M975.5 165.0v4.6M976.7 166.6a0.8 1.1 0 1 0 .1 0M980.5 165.0v4.1M978.6 167.5h3.6"/></g><g stroke="#8a8fb0" stroke-width="0.7" fill="none" opacity="0.55" stroke-linecap="round"><path d="M758.0 170.0h18.0"/><path d="M760.1 170.0v4.1M758.6 172.5h2.8M762.7 170.0v4.6M763.8 171.6a0.8 1.1 0 1 0 .1 0M766.9 170.0v4.1M765.7 172.5h2.1M772.3 170.0v4.6M768.8 171.6q2.0 3.2 3.5 0.9M775.3 170.0v4.6M773.6 171.6q1.2 3.2 1.7 0.9"/></g><g stroke="#8a8fb0" stroke-width="0.7" fill="none" opacity="0.55" stroke-linecap="round"><path d="M758.0 178.0h18.0"/><path d="M760.6 178.0v4.1M758.6 180.5h3.6M763.6 178.0v4.6M764.7 179.6a0.8 1.1 0 1 0 .1 0M766.6 179.4l1.6 2.8l1.5 -3.7M769.6 178.0v4.6M770.9 178.0v4.6M772.8 179.6a1.2 1.1 0 1 0 .1 0"/></g><g stroke="#9a9fb5" stroke-width="0.7" fill="none" opacity="0.55" stroke-linecap="round"><path d="M617.0 352.0h22.0"/><path d="M617.9 352.0v4.6M619.0 353.6a0.8 1.1 0 1 0 .1 0M622.5 352.0v4.1M620.8 354.5h3.0M626.7 352.0v4.6M624.9 353.6q1.2 3.2 1.8 0.9M630.1 352.0v4.1M628.0 354.5h3.9M633.0 353.4l1.3 2.8l1.2 -3.7M635.4 352.0v4.6M638.2 352.0v4.1M636.4 354.5h3.4"/></g><g stroke="#9a9fb5" stroke-width="0.7" fill="none" opacity="0.55" stroke-linecap="round"><path d="M612.0 360.0h30.0"/><path d="M612.9 360.0v4.6M614.6 361.6a1.1 1.1 0 1 0 .1 0M617.3 360.0v4.6M619.3 361.6a1.2 1.1 0 1 0 .1 0M623.0 360.0v4.1M621.8 362.5h2.1M625.1 360.0v4.6M626.4 361.6a0.9 1.1 0 1 0 .1 0M628.4 361.4l2.1 2.8l1.9 -3.7M632.2 360.0v4.6M633.5 360.0v4.6M635.2 361.6a1.1 1.1 0 1 0 .1 0M637.6 361.4l1.4 2.8l1.3 -3.7M640.2 360.0v4.6"/></g><g transform="rotate(38 697 62)"><g stroke="#999" stroke-width="0.7" fill="none" opacity="0.55" stroke-linecap="round"><path d="M697.0 62.0h44.0"/><path d="M697.9 62.0v4.8M699.2 63.7a0.9 1.2 0 1 0 .1 0M701.5 62.0v4.8M702.6 63.7a0.8 1.2 0 1 0 .1 0M706.9 62.0v4.8M704.4 63.7q1.5 3.4 2.5 1.0M708.5 62.0v4.8M709.8 63.7a0.9 1.2 0 1 0 .1 0M712.1 62.0v4.8M713.8 63.7a1.1 1.2 0 1 0 .1 0M719.2 62.0v4.8M716.1 63.7q1.8 3.4 3.0 1.0M720.8 62.0v4.8M721.9 63.7a0.8 1.2 0 1 0 .1 0M725.7 62.0v4.3M723.8 64.6h3.4M729.8 62.0v4.3M728.3 64.6h2.6M732.0 63.4l1.2 2.9l1.1 -3.8M734.1 62.0v4.8M735.4 62.0v4.8M736.5 63.7a0.7 1.2 0 1 0 .1 0M742.1 62.0v4.8M738.3 63.7q2.2 3.4 3.8 1.0"/></g></g>
<text x="836" y="394" font-size="6.5px" fill="#9aa" font-family="Liberation Sans, sans-serif" opacity=".8">Companiganj</text>
<g transform="translate(661.4 207.2)"><path d="M0.5 -0.5 L6 -9 L13 -13.5 L14.5 -11.5 L9 -5 Z" fill="#000" opacity=".18" filter="url(#bl)"/><path d="M0 0 C-1.3 -5.8 -8.0 -11.2 -8.0 -18.2 A8.0 8.0 0 0 1 8.0 -18.2 C8.0 -11.2 1.3 -5.8 0 0Z" fill="url(#mg)" stroke="#2a68a6" stroke-width=".6"/><circle cx="0" cy="-17.6" r="2.8" fill="#fff"/></g><g transform="translate(747.0 190.2)"><path d="M0.5 -0.5 L6 -9 L13 -13.5 L14.5 -11.5 L9 -5 Z" fill="#000" opacity=".18" filter="url(#bl)"/><path d="M0 0 C-1.3 -5.8 -8.0 -11.2 -8.0 -18.2 A8.0 8.0 0 0 1 8.0 -18.2 C8.0 -11.2 1.3 -5.8 0 0Z" fill="url(#mg)" stroke="#2a68a6" stroke-width=".6"/><circle cx="0" cy="-17.6" r="2.8" fill="#fff"/></g><g transform="translate(851.4 209.3)"><path d="M0.5 -0.5 L6 -9 L13 -13.5 L14.5 -11.5 L9 -5 Z" fill="#000" opacity=".18" filter="url(#bl)"/><path d="M0 0 C-1.3 -5.8 -8.0 -11.2 -8.0 -18.2 A8.0 8.0 0 0 1 8.0 -18.2 C8.0 -11.2 1.3 -5.8 0 0Z" fill="url(#mg)" stroke="#2a68a6" stroke-width=".6"/><circle cx="0" cy="-17.6" r="2.8" fill="#fff"/></g><g transform="translate(938.3 134.8)"><path d="M0.5 -0.5 L6 -9 L13 -13.5 L14.5 -11.5 L9 -5 Z" fill="#000" opacity=".18" filter="url(#bl)"/><path d="M0 0 C-1.3 -5.8 -8.0 -11.2 -8.0 -18.2 A8.0 8.0 0 0 1 8.0 -18.2 C8.0 -11.2 1.3 -5.8 0 0Z" fill="url(#mg)" stroke="#2a68a6" stroke-width=".6"/><circle cx="0" cy="-17.6" r="2.8" fill="#fff"/></g><g transform="translate(1051.3 112.9)"><path d="M0.5 -0.5 L6 -9 L13 -13.5 L14.5 -11.5 L9 -5 Z" fill="#000" opacity=".18" filter="url(#bl)"/><path d="M0 0 C-1.3 -5.8 -8.0 -11.2 -8.0 -18.2 A8.0 8.0 0 0 1 8.0 -18.2 C8.0 -11.2 1.3 -5.8 0 0Z" fill="url(#mg)" stroke="#2a68a6" stroke-width=".6"/><circle cx="0" cy="-17.6" r="2.8" fill="#fff"/></g><g transform="translate(821.7 286.0)"><path d="M0.5 -0.5 L6 -9 L13 -13.5 L14.5 -11.5 L9 -5 Z" fill="#000" opacity=".18" filter="url(#bl)"/><path d="M0 0 C-1.3 -5.8 -8.0 -11.2 -8.0 -18.2 A8.0 8.0 0 0 1 8.0 -18.2 C8.0 -11.2 1.3 -5.8 0 0Z" fill="url(#mg)" stroke="#2a68a6" stroke-width=".6"/><circle cx="0" cy="-17.6" r="2.8" fill="#fff"/></g><g transform="translate(929.4 306.7)"><path d="M0.5 -0.5 L6 -9 L13 -13.5 L14.5 -11.5 L9 -5 Z" fill="#000" opacity=".18" filter="url(#bl)"/><path d="M0 0 C-1.3 -5.8 -8.0 -11.2 -8.0 -18.2 A8.0 8.0 0 0 1 8.0 -18.2 C8.0 -11.2 1.3 -5.8 0 0Z" fill="url(#mg)" stroke="#2a68a6" stroke-width=".6"/><circle cx="0" cy="-17.6" r="2.8" fill="#fff"/></g>
<g>
<rect x="557.6" y="14.1" width="23.2" height="43.6" rx="3.2" fill="#000" opacity=".18"/>
<rect x="558.8" y="15.3" width="20.8" height="41.2" rx="2.2" fill="#fff"/>
<path d="M558.8 36h20.8" stroke="#ccc" stroke-width=".7"/>
<path d="M565.2 26.2h8.8M569.6 21.8v8.8M565.4 47h8.4" stroke="#000" stroke-width="1.7"/>
<rect x="995" y="404.4" width="166" height="11" fill="#fff" opacity=".8"/>
<rect x="998" y="406.3" width="7.6" height="2.6" fill="#4c7be1"/><rect x="998" y="408.9" width="7.6" height="2.6" fill="#ffd500"/>
<text x="1008.2" y="412.3" font-size="8px" font-family="Liberation Sans, sans-serif" fill="#0078a8" textLength="22.6" lengthAdjust="spacingAndGlyphs">Leaflet</text>
<text x="1033.9" y="412.3" font-size="8px" font-family="Liberation Sans, sans-serif" fill="#333" textLength="122.4" lengthAdjust="spacingAndGlyphs">| Â© OpenStreetMap contributors</text>
</g>
</g></svg>
<!--MAP_E-->
<h2 style="left:559.8px;top:450.9px;font-size:14px" id="pd">Pairwise Distances (km)</h2>
<!--D_S-->
<div class="tx" style="left:560.7px;top:477.9px;letter-spacing:-0.44px">Feni to Fulgazi:</div><div class="tx" style="left:641.5px;top:477.9px;letter-spacing:0.49px">11.87 km</div>
<div class="tx" style="left:560.7px;top:490.7px;letter-spacing:-0.48px">Feni to Daganbhuiyan:</div><div class="tx" style="left:677.9px;top:490.7px;letter-spacing:0.40px">11.89 km</div>
<div class="tx" style="left:560.7px;top:503.5px;letter-spacing:-0.42px">Feni to Companigonj:</div><div class="tx" style="left:672.8px;top:503.5px;letter-spacing:0.28px">19.89 km</div>
<div class="tx" style="left:560.7px;top:516.4px;letter-spacing:-0.45px">Feni to Senbag:</div><div class="tx" style="left:644.5px;top:516.4px;letter-spacing:0.36px">20.62 km</div>
<div class="tx" style="left:560.7px;top:529.2px;letter-spacing:-0.36px">Feni to Sonagazi:</div><div class="tx" style="left:653.3px;top:529.2px;letter-spacing:0.28px">17.75 km</div>
<div class="tx" style="left:560.7px;top:542.0px;letter-spacing:-0.46px">Feni to Chowmuhani:</div><div class="tx" style="left:671.5px;top:542.0px;letter-spacing:0.36px">29.66 km</div>
<div class="tx" style="left:560.7px;top:554.8px;letter-spacing:-0.53px">Fulgazi to Daganbhuiyan:</div><div class="tx" style="left:690.5px;top:554.8px;letter-spacing:0.36px">22.96 km</div>
<div class="tx" style="left:560.7px;top:567.6px;letter-spacing:-0.50px">Fulgazi to Companigonj:</div><div class="tx" style="left:686.4px;top:567.6px;letter-spacing:0.31px">29.80 km</div>
<div class="tx" style="left:560.7px;top:580.5px;letter-spacing:-0.40px">Fulgazi to Senbag:</div><div class="tx" style="left:658.9px;top:580.5px;letter-spacing:0.36px">32.45 km</div>
<div class="tx" style="left:560.7px;top:593.3px;letter-spacing:-0.41px">Fulgazi to Sonagazi:</div><div class="tx" style="left:667.0px;top:593.3px;letter-spacing:0.28px">23.60 km</div>
<div class="tx" style="left:560.7px;top:606.1px;letter-spacing:-0.54px">Fulgazi to Chowmuhani:</div><div class="tx" style="left:684.4px;top:606.1px;letter-spacing:0.42px">41.52 km</div>
<div class="tx" style="left:560.7px;top:618.9px;letter-spacing:-0.41px">Daganbhuiyan to Companigonj:</div><div class="tx" style="left:722.2px;top:618.9px;letter-spacing:0.34px">8.61 km</div>
<div class="tx" style="left:560.7px;top:631.7px;letter-spacing:-0.42px">Daganbhuiyan to Senbag:</div><div class="tx" style="left:695.6px;top:631.7px;letter-spacing:0.22px">10.96 km</div>
<div class="tx" style="left:560.7px;top:644.6px;letter-spacing:-0.49px">Daganbhuiyan to Sonagazi:</div><div class="tx" style="left:702.8px;top:644.6px;letter-spacing:0.31px">12.81 km</div>
<div class="tx" style="left:560.7px;top:657.4px;letter-spacing:-0.55px">Daganbhuiyan to Chowmuhani:</div><div class="tx" style="left:721.2px;top:657.4px;letter-spacing:0.22px">19.79 km</div>
<!--D_E-->

</body>
</html>
